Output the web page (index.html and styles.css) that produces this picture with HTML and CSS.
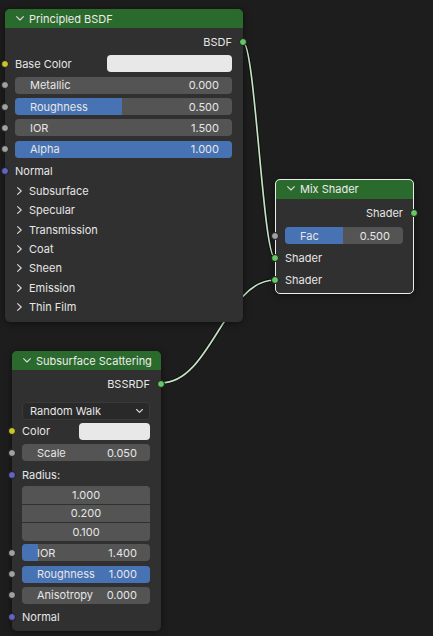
FILE: index.html
```html
<!DOCTYPE html>
<html>
<head>
<meta charset="utf-8">
<link rel="stylesheet" href="styles.css">
</head>
<body>
<div class="canvas">
  <svg class="wires" width="433" height="636" viewBox="0 0 433 636">
    <path class="wire-bg" d="M243,42 C255,42 263,258 275,258"/>
    <path class="wire" d="M243,42 C255,42 263,258 275,258"/>
    <path class="wire-bg" d="M161,383 C211,383 225,280 275,280"/>
    <path class="wire" d="M161,383 C211,383 225,280 275,280"/>
  </svg>

  <div class="node principled">
    <div class="hdr">
      <svg class="chev" width="8" height="5" viewBox="0 0 8 5"><polyline points="0.6,0.6 4,4 7.4,0.6"/></svg>
      <span>Principled BSDF</span>
    </div>
    <div class="body">
      <div class="row out"><span>BSDF</span><i class="sock green"></i></div>
      <div class="row"><i class="sock yellow"></i><span>Base Color</span><div class="swatch wide"></div></div>
      <div class="row"><i class="sock gray"></i><div class="field"><span>Metallic</span><span>0.000</span></div></div>
      <div class="row"><i class="sock gray"></i><div class="field"><div class="fill" style="width:49.3%"></div><span>Roughness</span><span>0.500</span></div></div>
      <div class="row"><i class="sock gray"></i><div class="field"><span>IOR</span><span>1.500</span></div></div>
      <div class="row"><i class="sock gray"></i><div class="field"><div class="fill" style="width:100%"></div><span>Alpha</span><span>1.000</span></div></div>
      <div class="row"><i class="sock purple"></i><span>Normal</span></div>
      <div class="prow"><svg class="pchev" width="5" height="8" viewBox="0 0 5 8"><polyline points="0.6,0.6 4.2,4 0.6,7.4"/></svg><span>Subsurface</span></div>
      <div class="prow"><svg class="pchev" width="5" height="8" viewBox="0 0 5 8"><polyline points="0.6,0.6 4.2,4 0.6,7.4"/></svg><span>Specular</span></div>
      <div class="prow"><svg class="pchev" width="5" height="8" viewBox="0 0 5 8"><polyline points="0.6,0.6 4.2,4 0.6,7.4"/></svg><span>Transmission</span></div>
      <div class="prow"><svg class="pchev" width="5" height="8" viewBox="0 0 5 8"><polyline points="0.6,0.6 4.2,4 0.6,7.4"/></svg><span>Coat</span></div>
      <div class="prow"><svg class="pchev" width="5" height="8" viewBox="0 0 5 8"><polyline points="0.6,0.6 4.2,4 0.6,7.4"/></svg><span>Sheen</span></div>
      <div class="prow"><svg class="pchev" width="5" height="8" viewBox="0 0 5 8"><polyline points="0.6,0.6 4.2,4 0.6,7.4"/></svg><span>Emission</span></div>
      <div class="prow"><svg class="pchev" width="5" height="8" viewBox="0 0 5 8"><polyline points="0.6,0.6 4.2,4 0.6,7.4"/></svg><span>Thin Film</span></div>
    </div>
  </div>

  <div class="node mix">
    <div class="hdr">
      <svg class="chev" width="8" height="5" viewBox="0 0 8 5"><polyline points="0.6,0.6 4,4 7.4,0.6"/></svg>
      <span>Mix Shader</span>
    </div>
    <div class="body">
      <div class="row out"><span>Shader</span><i class="sock green"></i></div>
      <div class="row"><i class="sock gray"></i><div class="field"><div class="fill" style="width:48.9%"></div><span>Fac</span><span>0.500</span></div></div>
      <div class="row"><i class="sock green"></i><span>Shader</span></div>
      <div class="row"><i class="sock green"></i><span>Shader</span></div>
    </div>
  </div>

  <div class="node sss">
    <div class="hdr">
      <svg class="chev" width="8" height="5" viewBox="0 0 8 5"><polyline points="0.6,0.6 4,4 7.4,0.6"/></svg>
      <span>Subsurface Scattering</span>
    </div>
    <div class="body">
      <div class="row out"><span>BSSRDF</span><i class="sock green"></i></div>
      <div class="row ddrow">
        <div class="dd"><span>Random Walk</span><svg class="ddchev" width="7" height="4" viewBox="0 0 7 4"><polyline points="0.6,0.5 3.5,3.3 6.4,0.5"/></svg></div>
      </div>
      <div class="row"><i class="sock yellow"></i><span>Color</span><div class="swatch narrow"></div></div>
      <div class="row"><i class="sock gray"></i><div class="field"><span>Scale</span><span>0.050</span></div></div>
      <div class="row radius"><i class="sock purple"></i><span>Radius:</span></div>
      <div class="vec">
        <div class="vfield">1.000</div>
        <div class="vfield">0.200</div>
        <div class="vfield">0.100</div>
      </div>
      <div class="row first-after-vec"><i class="sock gray"></i><div class="field"><div class="fill" style="width:12.3%"></div><span>IOR</span><span>1.400</span></div></div>
      <div class="row"><i class="sock gray"></i><div class="field"><div class="fill" style="width:100%"></div><span>Roughness</span><span>1.000</span></div></div>
      <div class="row"><i class="sock gray"></i><div class="field"><span>Anisotropy</span><span>0.000</span></div></div>
      <div class="row"><i class="sock purple"></i><span>Normal</span></div>
    </div>
  </div>
</div>
</body>
</html>
```

FILE: styles.css
```css
html, body {
  margin: 0;
  padding: 0;
  background: #1d1d1d;
}

body {
  font-family: Inter, "DejaVu Sans", sans-serif;
  font-size: 11px;
  color: #e6e6e6;
}

.canvas {
  position: relative;
  width: 433px;
  height: 636px;
  overflow: hidden;
  background: #1d1d1d;
}

.wires {
  position: absolute;
  left: 0;
  top: 0;
}

.wire-bg {
  fill: none;
  stroke: rgba(10, 10, 10, 0.75);
  stroke-width: 3.4;
}

.wire {
  fill: none;
  stroke: #c2e2c2;
  stroke-width: 1.7;
}

.node {
  position: absolute;
  background: #303030;
  border-radius: 5px;
  box-shadow: 0 1px 6px rgba(0, 0, 0, 0.5);
  display: flex;
  flex-direction: column;
  box-sizing: border-box;
}

.principled { left: 5px; top: 9px; width: 238px; height: 313px; }
.mix { left: 275px; top: 179px; width: 139px; height: 115px; }
.sss { left: 12px; top: 351px; width: 149px; height: 280px; }

.mix::after {
  content: "";
  position: absolute;
  left: 0; top: 0; right: 0; bottom: 0;
  border: 1px solid #ececec;
  border-radius: 5px;
  z-index: 1;
  pointer-events: none;
}

.hdr {
  flex: none;
  height: 19px;
  background: #2b6a2d;
  border-radius: 5px 5px 0 0;
  display: flex;
  align-items: center;
  padding-left: 11px;
  gap: 5px;
  color: #ececec;
}

.mix .hdr {
  height: 20px;
  padding-left: 12px;
}

.chev polyline, .pchev polyline, .ddchev polyline {
  fill: none;
  stroke: #dadada;
  stroke-width: 1.1;
  stroke-linecap: round;
  stroke-linejoin: round;
}

.chev { margin-top: -1px; }

.body {
  display: flex;
  flex-direction: column;
  padding-top: 3.8px;
}

.mix .body { padding-top: 3.3px; }
.sss .body { padding-top: 3.3px; }

.row {
  position: relative;
  flex: none;
  display: flex;
  align-items: center;
  height: 21.35px;
  padding: 0 11px 0 10px;
}

.mix .row { height: 22.3px; }

.row.out { justify-content: flex-end; }

.sock {
  position: absolute;
  left: -4px;
  top: 50%;
  margin-top: -4px;
  width: 8px;
  height: 8px;
  border-radius: 50%;
  box-sizing: border-box;
  border: 1px solid #1c1c1c;
  z-index: 2;
}

.row.out .sock { left: auto; right: -4px; }

.sock.green { background: #63c763; }
.sock.yellow { background: #c7c729; }
.sock.gray { background: #a1a1a1; }
.sock.purple { background: #6363c7; }

.prow {
  flex: none;
  height: 19.33px;
  display: flex;
  align-items: center;
  padding-left: 12px;
  gap: 7px;
}

.field {
  position: relative;
  flex: 1;
  height: 17px;
  border-radius: 4px;
  background: #545454;
  display: flex;
  align-items: center;
  justify-content: space-between;
  padding: 0 13px 0 15px;
  overflow: hidden;
}

.field span { position: relative; }

.fill {
  position: absolute;
  left: 0;
  top: 0;
  bottom: 0;
  background: #4772b3;
}

.swatch {
  margin-left: auto;
  height: 17px;
  border-radius: 4px;
  background: #e8e8e8;
}

.swatch.wide { width: 125px; }
.swatch.narrow { width: 71px; }

.ddrow {
  height: 26px;
  align-items: flex-end;
  padding-bottom: 1px;
  box-sizing: border-box;
}

.dd {
  flex: 1;
  height: 18px;
  box-sizing: border-box;
  border-radius: 4px;
  background: #292929;
  border: 1px solid #3a3a3a;
  display: flex;
  align-items: center;
  justify-content: space-between;
  padding: 0 6px 0 7px;
}

.radius { height: 22.4px; }

.vec {
  flex: none;
  margin: 0 11px 0 10px;
  display: flex;
  flex-direction: column;
  gap: 1px;
  border-radius: 4px;
  overflow: hidden;
}

.vfield {
  height: 17.8px;
  background: #545454;
  display: flex;
  align-items: center;
  justify-content: center;
}

.first-after-vec { margin-top: 1px; }
```
